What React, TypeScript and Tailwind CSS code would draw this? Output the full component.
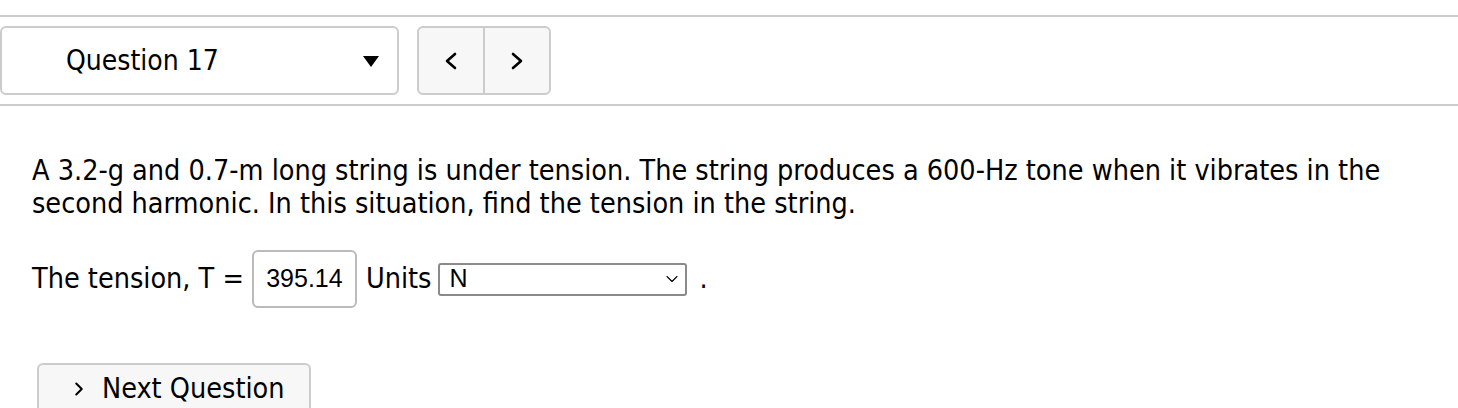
import { ChevronRight, ChevronDown } from 'lucide-react';

function Arrow({ dir }: { dir: 'left' | 'right' }) {
  return (
    <svg width="14" height="18" viewBox="0 0 14 18" fill="none">
      <path
        d={dir === 'left' ? 'M11 2 L3 9 L11 16' : 'M3 2 L11 9 L3 16'}
        stroke="#000"
        strokeWidth="2.6"
        strokeLinecap="round"
        strokeLinejoin="round"
      />
    </svg>
  );
}

export default function App() {
  return (
    <div className="w-[1458px] h-[408px] overflow-hidden bg-white text-black font-['DejaVu_Sans_Condensed','DejaVu_Sans',sans-serif]">
      <div className="pt-[15px] border-b-2 border-[#cccccc]" />
      <div className="flex items-center gap-[18px] py-[9px]">
        <div className="w-[399px] h-[69px] rounded-md border-2 border-[#cccccc] flex items-center pl-[64px] pr-[18px]">
          <span className="text-[28px] flex-1">Question 17</span>
          <svg width="16" height="11" viewBox="0 0 16 11" className="mt-[2px]">
            <path d="M0 0 H16 L8 11 Z" fill="#000" />
          </svg>
        </div>
        <div className="flex h-[69px] w-[134px] rounded-md border-2 border-[#cccccc] bg-[#f7f7f7] overflow-hidden">
          <button className="flex-1 flex items-center justify-center border-r-2 border-[#cccccc]">
            <Arrow dir="left" />
          </button>
          <button className="flex-1 flex items-center justify-center">
            <Arrow dir="right" />
          </button>
        </div>
      </div>
      <div className="border-b-2 border-[#cccccc]" />

      <div className="pl-[32px] pt-[48px]">
        <p className="text-[28.5px] leading-[33px] whitespace-nowrap">
          A 3.2-g and 0.7-m long string is under tension. The string produces a 600-Hz tone when it vibrates in the
          <br />
          second harmonic. In this situation, find the tension in the string.
        </p>

        <div className="flex items-center mt-[30px] text-[28.5px]">
          <span>The tension, T =</span>
          <div className="ml-[8px] w-[105px] h-[58px] rounded-md border-2 border-[#bbbbbb] flex items-center justify-center font-['Liberation_Sans',sans-serif] text-[25px]">
            395.14
          </div>
          <span className="ml-[9px]">Units</span>
          <div className="ml-[7px] w-[249px] h-[33px] rounded-[3px] border-2 border-[#8a8a8a] flex items-center pl-[9px] pr-[3px] font-['Liberation_Sans',sans-serif] text-[25px]">
            <span className="flex-1">N</span>
            <ChevronDown size={20} strokeWidth={1.3} />
          </div>
          <span className="ml-[12px]">.</span>
        </div>

        <button className="mt-[55px] ml-[5px] w-[274px] h-[50px] rounded-md border-2 border-[#cccccc] bg-[#f7f7f7] flex items-start pt-[3px] pl-[29px] gap-[12px] text-[28.5px]">
          <ChevronRight size={22} strokeWidth={2.2} className="mt-[10px]" />
          <span>Next Question</span>
        </button>
      </div>
    </div>
  );
}
